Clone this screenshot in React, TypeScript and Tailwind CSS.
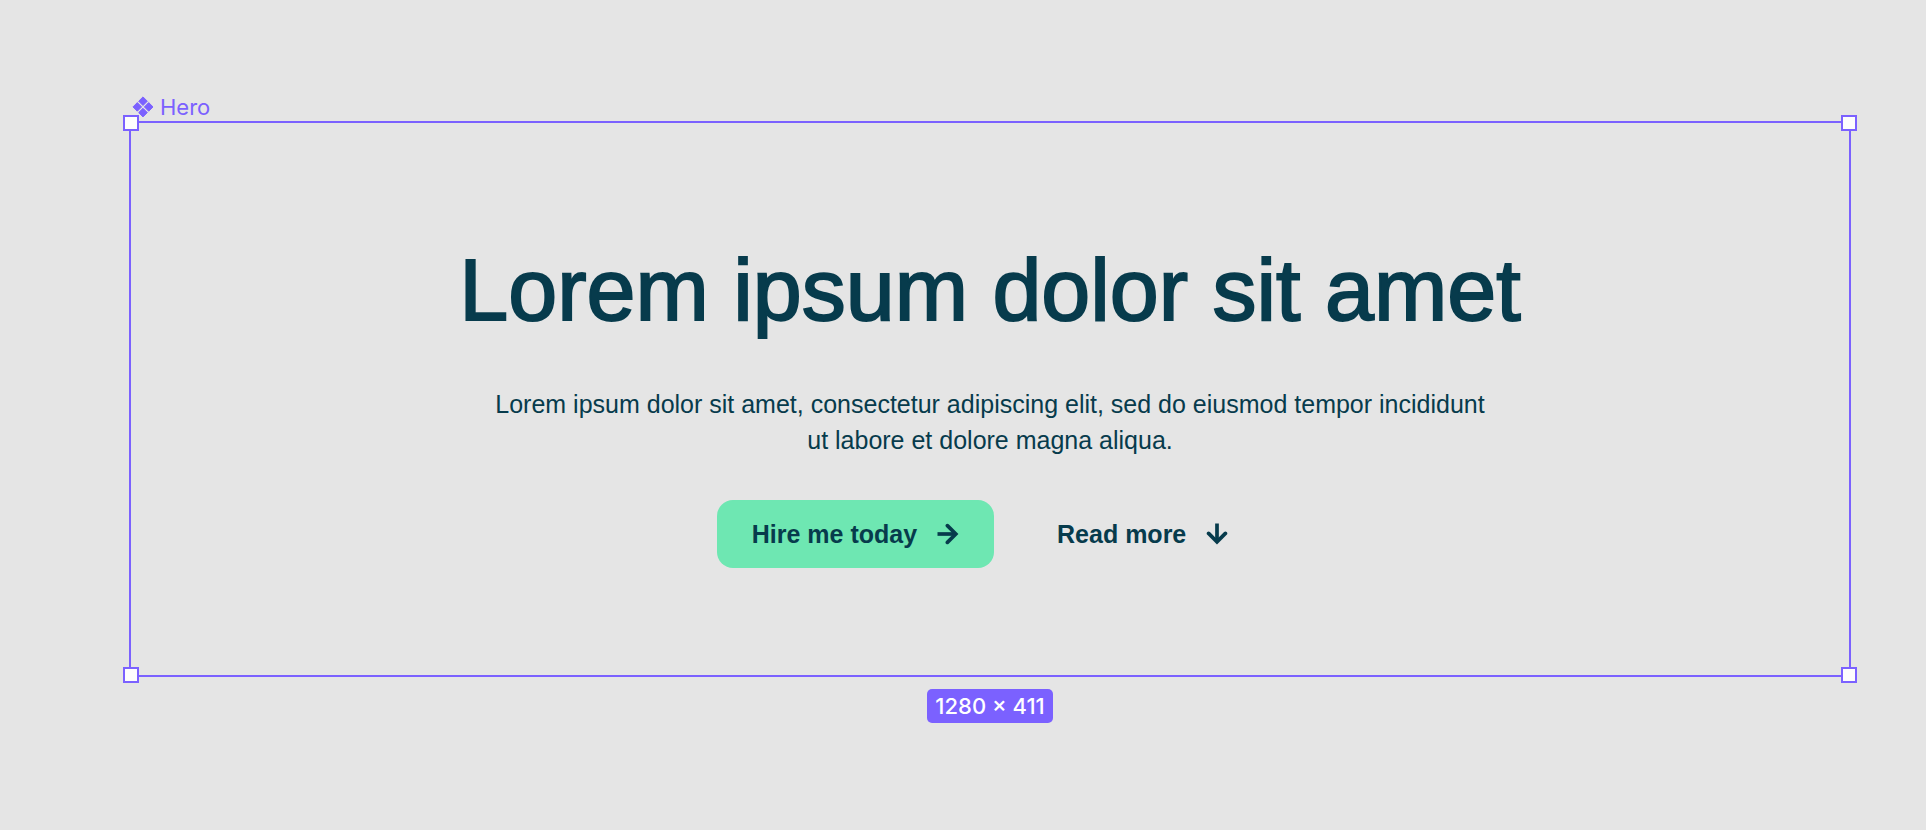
import type { ReactNode } from "react";

const handleBase = "absolute size-4 border-2 border-[#7b61ff] bg-[#fdfdfd]";

function ComponentIcon() {
  return (
    <svg
      className="size-[22px]"
      viewBox="0 0 22 22"
      fill="currentColor"
      stroke="currentColor"
      strokeWidth="1"
      strokeLinejoin="round"
      aria-hidden="true"
    >
      <path d="M11 0.9 15.3 5.2 11 9.5 6.7 5.2Z" />
      <path d="M11 12.3 15.3 16.6 11 20.9 6.7 16.6Z" />
      <path d="M5.3 6.6 9.6 10.9 5.3 15.2 1 10.9Z" />
      <path d="M16.7 6.6 21 10.9 16.7 15.2 12.4 10.9Z" />
    </svg>
  );
}

function ArrowRight({ className = "" }: { className?: string }) {
  return (
    <svg
      className={`size-[22px] ${className}`}
      viewBox="0 0 22 22"
      fill="none"
      stroke="currentColor"
      strokeWidth="3.7"
      aria-hidden="true"
    >
      <path d="M0.5 11H18" />
      <path d="M10.4 2.6 18.8 11 10.4 19.4" strokeLinecap="round" />
    </svg>
  );
}

function SelectionFrame({ children }: { children: ReactNode }) {
  return (
    <div className="relative border-2 border-[#7b61ff]">
      {children}
      <span className={`${handleBase} -top-2 -left-2`} />
      <span className={`${handleBase} -top-2 -right-2`} />
      <span className={`${handleBase} -bottom-2 -left-2`} />
      <span className={`${handleBase} -right-2 -bottom-2`} />
    </div>
  );
}

export default function App() {
  return (
    <main className="flex min-h-screen flex-col bg-[#e5e5e5] pt-[93px] pr-[75px] pb-12 pl-[129px] font-['Liberation_Sans',Arial,sans-serif] text-[#073b4c]">
      <div className="flex items-center gap-1.5 pl-[3px] font-['Inter',sans-serif] text-[22px] leading-7 text-[#7b61ff]">
        <ComponentIcon />
        <span>Hero</span>
      </div>

      <SelectionFrame>
        <section className="flex flex-col items-center px-8 pt-[115px] pb-[107px] text-center">
          <h1 className="text-[88px] leading-[104px] [-webkit-text-stroke:2px_currentColor]">
            Lorem ipsum dolor sit amet
          </h1>
          <p className="mt-11 max-w-[1000px] text-[25px] leading-9">
            Lorem ipsum dolor sit amet, consectetur adipiscing elit, sed do eiusmod tempor incididunt
            ut labore et dolore magna aliqua.
          </p>
          <div className="mt-[42px] flex items-center gap-7 text-[25px] leading-7 font-bold">
            <button
              type="button"
              className="flex items-center gap-5 rounded-2xl bg-[#6ee7b2] px-[35px] py-5"
            >
              Hire me today
              <ArrowRight />
            </button>
            <button type="button" className="flex items-center gap-5 rounded-2xl px-[35px] py-5">
              Read more
              <ArrowRight className="rotate-90" />
            </button>
          </div>
        </section>
      </SelectionFrame>

      <div className="mt-3 self-center rounded-[5px] bg-[#7b61ff] px-2 py-[3px] font-['Inter',sans-serif] text-[22px] leading-7 font-medium text-white">
        1280 × 411
      </div>
    </main>
  );
}
